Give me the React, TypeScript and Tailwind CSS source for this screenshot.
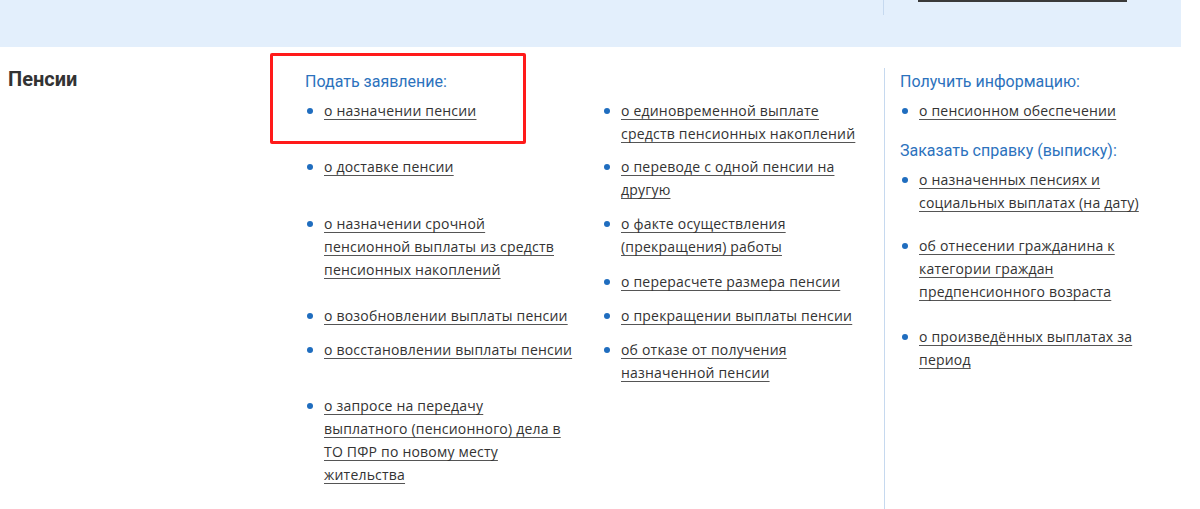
import React from 'react';

const link = "text-[#333] underline underline-offset-[3px] decoration-[#555] tracking-[0.2px]";

function Item({ text, mt }: { text: React.ReactNode; mt: string }) {
  return (
    <li className={`flex items-start ${mt}`}>
      <span className="mt-[9px] ml-[2px] h-[6px] w-[6px] shrink-0 rounded-full bg-[#1f6dbf]" />
      <a href="#" className={`ml-[11px] ${link}`}>
        {text}
      </a>
    </li>
  );
}

function Heading({ children, className = '' }: { children: React.ReactNode; className?: string }) {
  return (
    <div
      className={`text-[16px] leading-[24px] text-[#2c72bd] ${className}`}
      style={{ fontFamily: 'Roboto, "Noto Sans", sans-serif' }}
    >
      {children}
    </div>
  );
}

export default function App() {
  return (
    <div
      className="relative h-[509px] w-[1200px] overflow-hidden bg-white text-[14px] leading-[23px]"
      style={{ fontFamily: '"Open Sans", "Noto Sans", sans-serif' }}
    >
      {/* верхняя полоса, снизу виден край предыдущего блока */}
      <div className="flex h-[47px] w-[1181px] bg-[#e3effc]">
        <div className="w-[883px]" />
        <div className="h-[15px] border-l border-[#c6d9ef]" />
        <div className="ml-[34px] h-[2px] w-[209px] bg-[#3a3a3a]" />
      </div>

      {/* раздел */}
      <div className="flex pt-[21px]">
        <div
          className="w-[305px] pl-[8px] text-[20px] font-bold leading-[22px] text-[#333]"
          style={{ fontFamily: 'Roboto, "Noto Sans", sans-serif' }}
        >
          Пенсии
        </div>

        <div className="w-[297px] pt-[2px]">
          <Heading>Подать заявление:</Heading>
          <ul>
            <Item mt="mt-[5px]" text="о назначении пенсии" />
            <Item mt="mt-[33px]" text="о доставке пенсии" />
            <Item
              mt="mt-[34px]"
              text={<>о назначении срочной<br />пенсионной выплаты из средств<br />пенсионных накоплений</>}
            />
            <Item mt="mt-[23px]" text="о возобновлении выплаты пенсии" />
            <Item mt="mt-[11px]" text="о восстановлении выплаты пенсии" />
            <Item
              mt="mt-[33px]"
              text={<>о запросе на передачу<br />выплатного (пенсионного) дела в<br />ТО ПФР по новому месту<br />жительства</>}
            />
          </ul>
        </div>

        <div className="w-[282px] pt-[26px]">
          <ul>
            <Item mt="mt-[5px]" text={<>о единовременной выплате<br />средств пенсионных накоплений</>} />
            <Item mt="mt-[10px]" text={<>о переводе с одной пенсии на<br />другую</>} />
            <Item mt="mt-[11px]" text={<>о факте осуществления<br />(прекращения) работы</>} />
            <Item mt="mt-[12px]" text="о перерасчете размера пенсии" />
            <Item mt="mt-[11px]" text="о прекращении выплаты пенсии" />
            <Item mt="mt-[11px]" text={<>об отказе от получения<br />назначенной пенсии</>} />
          </ul>
        </div>

        <div className="h-[441px] border-l border-[#c6d9ef] pl-[15px] pt-[2px]">
          <Heading>Получить информацию:</Heading>
          <ul>
            <Item mt="mt-[5px]" text="о пенсионном обеспечении" />
          </ul>
          <Heading className="mt-[17px]">Заказать справку (выписку):</Heading>
          <ul>
            <Item mt="mt-[5px]" text={<>о назначенных пенсиях и<br />социальных выплатах (на дату)</>} />
            <Item
              mt="mt-[20px]"
              text={<>об отнесении гражданина к<br />категории граждан<br />предпенсионного возраста</>}
            />
            <Item mt="mt-[22px]" text={<>о произведённых выплатах за<br />период</>} />
          </ul>
        </div>
      </div>

      {/* выделение */}
      <div className="absolute left-[270px] top-[53px] h-[91px] w-[256px] rounded-[2px] border-[3px] border-[#ff1a1a]" />
    </div>
  );
}
